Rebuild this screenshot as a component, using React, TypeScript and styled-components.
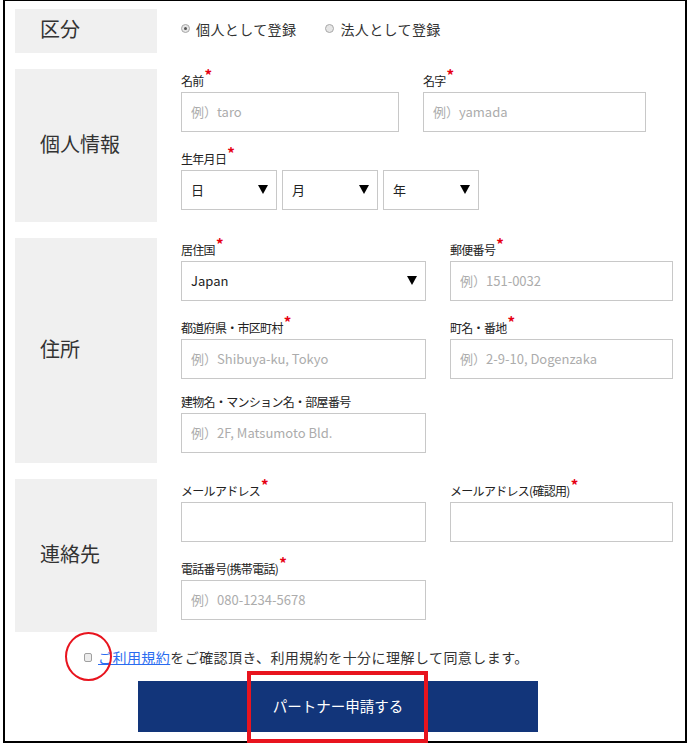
import React from 'react';
import styled, { createGlobalStyle } from 'styled-components';

const Global = createGlobalStyle`
  html, body { margin: 0; padding: 0; background: #fff; }
  body {
    font-family: "Noto Sans CJK JP", "Noto Sans", sans-serif;
    color: #333;
  }
  * { box-sizing: border-box; }
`;

const Frame = styled.div`
  position: relative;
  margin-left: 3px;
  width: 684px;
  height: 743px;
  border: 2px solid #000;
  border-top-width: 1px;
  padding: 8px 0 0 10px;
`;

const Rows = styled.div`
  display: flex;
  flex-direction: column;
  gap: 16px;
`;

const Row = styled.section`
  display: grid;
  grid-template-columns: 142px 1fr;
  column-gap: 24px;
`;

const RowLabel = styled.div`
  background: #f0f0f0;
  display: flex;
  align-items: center;
  padding: 0 0 4px 25px;
  font-size: 20px;
  line-height: 24px;
  color: #333;
`;

const Content = styled.div<{ $pb?: number }>`
  display: flex;
  flex-direction: column;
  gap: 15px;
  padding-bottom: ${p => p.$pb ?? 12}px;
`;

const RadioLine = styled.div`
  height: 44px;
  display: flex;
  align-items: center;
  gap: 29px;
  font-size: 14px;
  letter-spacing: 0.4px;
  color: #333;
  padding-bottom: 5px;
`;

const RadioItem = styled.label`
  display: flex;
  align-items: center;
  gap: 6px;
`;

const RadioDot = styled.span<{ $checked?: boolean }>`
  width: 9px;
  height: 9px;
  border-radius: 50%;
  border: 1px solid #a8a8a8;
  background: #e6e6e6;
  display: flex;
  align-items: center;
  justify-content: center;
  &::after {
    content: '';
    width: 3px;
    height: 3px;
    border-radius: 50%;
    background: ${p => (p.$checked ? '#555' : 'transparent')};
  }
`;

const FieldGrid = styled.div<{ $cols: string }>`
  display: grid;
  grid-template-columns: ${p => p.$cols};
  column-gap: 24px;
  row-gap: 15px;
`;

const Field = styled.div<{ $w?: number }>`
  display: flex;
  flex-direction: column;
  width: ${p => (p.$w ? `${p.$w}px` : 'auto')};
`;

const FieldLabel = styled.div<{ $req?: boolean }>`
  font-size: 12px;
  line-height: 16px;
  letter-spacing: -0.7px;
  color: #222;
  padding-top: ${p => (p.$req ? '4px' : '0')};
  margin-bottom: 3px;
  white-space: nowrap;
`;

const Star = styled.span`
  color: #e60012;
  font-size: 15px;
  font-weight: 700;
  position: relative;
  top: -5px;
  margin-left: 1px;
  line-height: 0;
`;

const TextInput = styled.input`
  width: 100%;
  height: 40px;
  border: 1px solid #c8c8c8;
  padding: 0 9px 2px;
  font-family: "Noto Sans CJK JP", sans-serif;
  font-size: 13px;
  color: #333;
  outline: none;
  background: #fff;
  &::placeholder { color: #acacac; }
`;

const SelectBox = styled.div<{ $w?: number }>`
  width: ${p => (p.$w ? `${p.$w}px` : '100%')};
  height: 40px;
  border: 1px solid #c8c8c8;
  padding: 0 8px 2px 9px;
  display: flex;
  align-items: center;
  justify-content: space-between;
  font-size: 13px;
  color: #222;
  background: #fff;
`;

const DateRow = styled.div`
  display: flex;
  gap: 5px;
`;

const Arrow = () => (
  <svg width="10" height="9" viewBox="0 0 10 9">
    <polygon points="0,0 10,0 5,9" fill="#000" />
  </svg>
);

const CheckRow = styled.div`
  margin-top: 13px;
  height: 24px;
  display: flex;
  align-items: center;
  padding-left: 69px;
  font-size: 14px;
  letter-spacing: 0.45px;
  color: #333;
  gap: 6px;
`;

const CheckBox = styled.span`
  width: 8px;
  height: 9px;
  border: 1px solid #a0a0a0;
  border-radius: 2px;
  background: #ececec;
`;

const TermsLink = styled.a`
  color: #2a6cf0;
  text-decoration: underline;
`;

const SubmitButton = styled.button`
  display: flex;
  align-items: center;
  justify-content: center;
  margin: 12px 0 0 123px;
  width: 400px;
  height: 51px;
  border: none;
  background: #12357a;
  color: #fff;
  font-family: "Noto Sans CJK JP", sans-serif;
  font-size: 14.5px;
  padding: 0 0 2px;
`;

const CircleMark = styled.div`
  position: absolute;
  left: 60px;
  top: 631px;
  width: 47px;
  height: 49px;
  border: 2.5px solid #e8141e;
  border-radius: 50%;
  pointer-events: none;
`;

const BoxMark = styled.div`
  position: absolute;
  left: 242px;
  top: 670px;
  width: 181px;
  height: 72px;
  border: 4px solid #e8141e;
  pointer-events: none;
`;

const Req = ({ children }: { children: React.ReactNode }) => (
  <FieldLabel $req>
    {children}
    <Star>*</Star>
  </FieldLabel>
);

export default function App() {
  return (
    <>
      <Global />
      <Frame>
        <Rows>
          <Row>
            <RowLabel>区分</RowLabel>
            <RadioLine>
              <RadioItem>
                <RadioDot $checked />
                個人として登録
              </RadioItem>
              <RadioItem>
                <RadioDot />
                法人として登録
              </RadioItem>
            </RadioLine>
          </Row>

          <Row>
            <RowLabel>個人情報</RowLabel>
            <Content>
              <FieldGrid $cols="218px 223px">
                <Field>
                  <Req>名前</Req>
                  <TextInput placeholder="例）taro" />
                </Field>
                <Field>
                  <Req>名字</Req>
                  <TextInput placeholder="例）yamada" />
                </Field>
              </FieldGrid>
              <Field>
                <Req>生年月日</Req>
                <DateRow>
                  <SelectBox $w={96}>
                    <span>日</span>
                    <Arrow />
                  </SelectBox>
                  <SelectBox $w={96}>
                    <span>月</span>
                    <Arrow />
                  </SelectBox>
                  <SelectBox $w={96}>
                    <span>年</span>
                    <Arrow />
                  </SelectBox>
                </DateRow>
              </Field>
            </Content>
          </Row>

          <Row>
            <RowLabel>住所</RowLabel>
            <Content $pb={10}>
              <FieldGrid $cols="245px 223px">
                <Field>
                  <Req>居住国</Req>
                  <SelectBox>
                    <span>Japan</span>
                    <Arrow />
                  </SelectBox>
                </Field>
                <Field>
                  <Req>郵便番号</Req>
                  <TextInput placeholder="例）151-0032" />
                </Field>
                <Field>
                  <Req>都道府県・市区町村</Req>
                  <TextInput placeholder="例）Shibuya-ku, Tokyo" />
                </Field>
                <Field>
                  <Req>町名・番地</Req>
                  <TextInput placeholder="例）2-9-10, Dogenzaka" />
                </Field>
              </FieldGrid>
              <Field $w={245}>
                <FieldLabel>建物名・マンション名・部屋番号</FieldLabel>
                <TextInput placeholder="例）2F, Matsumoto Bld." />
              </Field>
            </Content>
          </Row>

          <Row>
            <RowLabel>連絡先</RowLabel>
            <Content>
              <FieldGrid $cols="245px 223px">
                <Field>
                  <Req>メールアドレス</Req>
                  <TextInput />
                </Field>
                <Field>
                  <Req>メールアドレス(確認用)</Req>
                  <TextInput />
                </Field>
              </FieldGrid>
              <Field $w={245}>
                <Req>電話番号(携帯電話)</Req>
                <TextInput placeholder="例）080-1234-5678" />
              </Field>
            </Content>
          </Row>
        </Rows>

        <CheckRow>
          <CheckBox />
          <span>
            <TermsLink href="#">ご利用規約</TermsLink>をご確認頂き、利用規約を十分に理解して同意します。
          </span>
        </CheckRow>

        <SubmitButton type="button">パートナー申請する</SubmitButton>

        <CircleMark />
        <BoxMark />
      </Frame>
    </>
  );
}
